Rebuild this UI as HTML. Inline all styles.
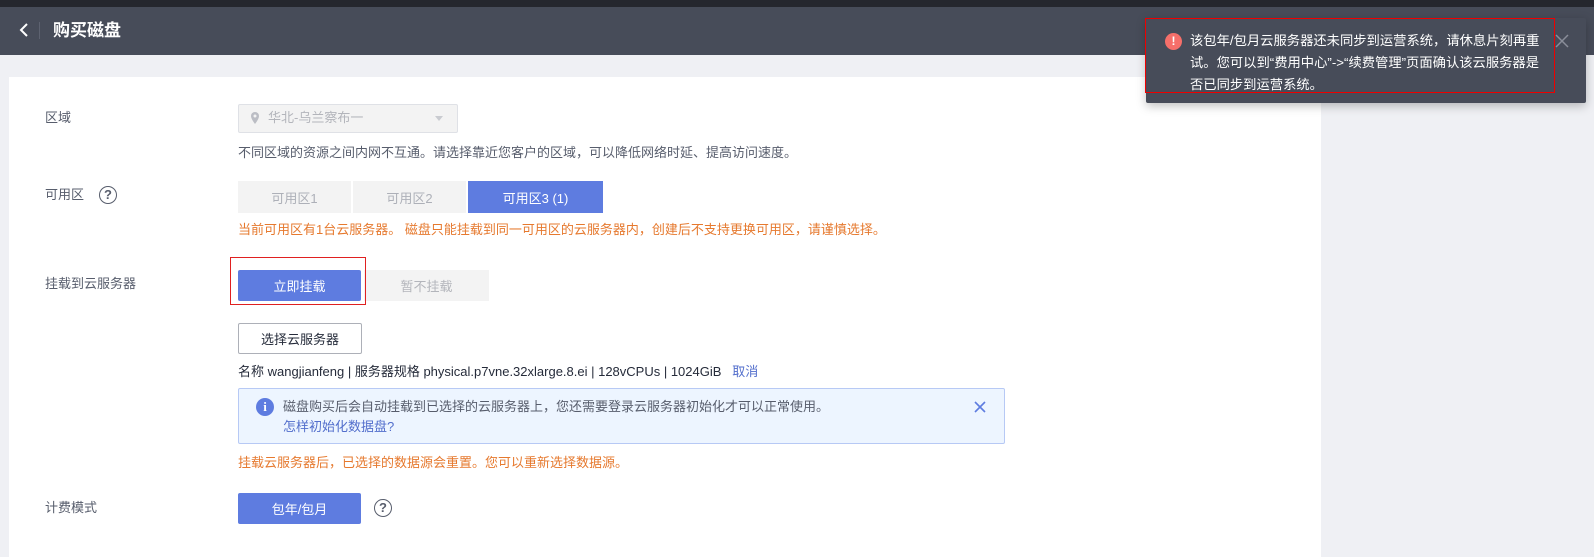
<!DOCTYPE html>
<html><head><meta charset="utf-8"><style>
*{margin:0;padding:0;box-sizing:border-box}
body{width:1594px;height:554px;overflow:hidden;background:#eff0f4;font-family:"Liberation Sans","Noto Sans CJK SC",sans-serif;font-size:13px;color:#252b3a;position:relative}
.a{position:absolute}
.lbl{position:absolute;left:45px;color:#575d6c;font-size:13px;line-height:16px}
.btn{position:absolute;display:flex;align-items:center;justify-content:center;font-size:13px}
</style></head><body>
<div class="a" style="left:0;top:0;width:1594px;height:7px;background:#25272e"></div>
<div class="a" style="left:0;top:7px;width:1594px;height:48px;background:#474c59"></div>
<svg class="a" style="left:18px;top:22px" width="12" height="16"><path d="M9 2 L3 8 L9 14" stroke="#fff" stroke-width="2" fill="none"/></svg>
<div class="a" style="left:39px;top:22px;width:1px;height:17px;background:#5d6270"></div>
<div class="a" style="left:53px;top:20px;color:#fff;font-size:17px;font-weight:bold;line-height:22px">购买磁盘</div>

<div class="a" style="left:9px;top:77px;width:1312px;height:480px;background:#fff"></div>

<div class="lbl" style="top:110px">区域</div>
<div class="a" style="left:238px;top:104px;width:220px;height:29px;background:#f3f3f3;border:1px solid #dfe1e6;border-radius:2px"></div>
<svg class="a" style="left:250px;top:111px" width="10" height="14"><path d="M5 1a4 4 0 0 0-4 4c0 3 4 8 4 8s4-5 4-8a4 4 0 0 0-4-4z" fill="#bbbdc4"/><circle cx="5" cy="5" r="1.5" fill="#f3f3f3"/></svg>
<div class="a" style="left:268px;top:110px;color:#b3b5bb;line-height:16px">华北-乌兰察布一</div>
<div class="a" style="left:435px;top:116px;border:4px solid transparent;border-top:5px solid #c9cbd0"></div>
<div class="a" style="left:238px;top:145px;color:#575d6c;line-height:16px">不同区域的资源之间内网不互通。请选择靠近您客户的区域，可以降低网络时延、提高访问速度。</div>

<div class="lbl" style="top:187px">可用区</div>
<div class="a" style="left:99px;top:186px;width:18px;height:18px;border:1.5px solid #575d6c;border-radius:50%;font-size:13px;line-height:15px;text-align:center;color:#575d6c;font-weight:bold">?</div>
<div class="btn" style="left:238px;top:181px;width:113px;height:32px;background:#f3f3f3;color:#adb0b8">可用区1</div>
<div class="btn" style="left:353px;top:181px;width:113px;height:32px;background:#f3f3f3;color:#adb0b8">可用区2</div>
<div class="btn" style="left:468px;top:181px;width:135px;height:32px;background:#5e7ce0;color:#fff">可用区3 (1)</div>
<div class="a" style="left:238px;top:222px;color:#e6792e;line-height:16px">当前可用区有1台云服务器。 磁盘只能挂载到同一可用区的云服务器内，创建后不支持更换可用区，请谨慎选择。</div>

<div class="lbl" style="top:276px">挂载到云服务器</div>
<div class="btn" style="left:238px;top:270px;width:123px;height:31px;background:#5e7ce0;color:#fff;border-radius:2px">立即挂载</div>
<div class="btn" style="left:364px;top:270px;width:125px;height:31px;background:#f3f3f3;color:#b3b5bb">暂不挂载</div>
<div class="a" style="left:230px;top:257px;width:136px;height:48px;border:1.5px solid #e02020"></div>
<div class="btn" style="left:238px;top:323px;width:124px;height:31px;border:1px solid #adb0b8;border-radius:2px;color:#252b3a">选择云服务器</div>
<div class="a" style="left:238px;top:364px;color:#252b3a;line-height:16px">名称 wangjianfeng | 服务器规格 physical.p7vne.32xlarge.8.ei | 128vCPUs | 1024GiB &nbsp;&nbsp;<span style="color:#526ecc">取消</span></div>

<div class="a" style="left:238px;top:388px;width:767px;height:56px;background:#edf5ff;border:1px solid #b7c9f5;border-radius:2px"></div>
<div class="a" style="left:256px;top:398px;width:18px;height:18px;border-radius:50%;background:#5e7ce0;color:#fff;font-weight:bold;font-size:13px;line-height:18px;text-align:center;font-family:'Liberation Serif',serif">i</div>
<div class="a" style="left:283px;top:399px;color:#575d6c;line-height:16px">磁盘购买后会自动挂载到已选择的云服务器上，您还需要登录云服务器初始化才可以正常使用。</div>
<div class="a" style="left:283px;top:419px;color:#526ecc;line-height:16px">怎样初始化数据盘?</div>
<svg class="a" style="left:974px;top:401px" width="12" height="12"><path d="M1 1L11 11M11 1L1 11" stroke="#5e7ce0" stroke-width="1.6"/></svg>
<div class="a" style="left:238px;top:455px;color:#e6792e;line-height:16px">挂载云服务器后，已选择的数据源会重置。您可以重新选择数据源。</div>

<div class="lbl" style="top:500px">计费模式</div>
<div class="btn" style="left:238px;top:493px;width:123px;height:31px;background:#5e7ce0;color:#fff;border-radius:2px">包年/包月</div>
<div class="a" style="left:374px;top:499px;width:18px;height:18px;border:1.5px solid #575d6c;border-radius:50%;font-size:13px;line-height:15px;text-align:center;color:#575d6c;font-weight:bold">?</div>

<div class="a" style="left:1146px;top:18px;width:440px;height:85px;background:#474c59;box-shadow:0 3px 10px rgba(0,0,0,.25);border-radius:2px"></div>
<div class="a" style="left:1145px;top:18px;width:410px;height:75px;border:1.5px solid #e00"></div>
<div class="a" style="left:1165px;top:33px;width:17px;height:17px;border-radius:50%;background:#f66f6a;color:#fff;font-weight:bold;font-size:12px;line-height:17px;text-align:center">!</div>
<div class="a" style="left:1190px;top:30px;width:362px;color:#fff;font-size:13.3px;line-height:22px">该包年/包月云服务器还未同步到运营系统，请休息片刻再重试。您可以到“费用中心”->“续费管理”页面确认该云服务器是否已同步到运营系统。</div>
<svg class="a" style="left:1555px;top:34px" width="14" height="14"><path d="M1 1L13 13M13 1L1 13" stroke="#8a8e99" stroke-width="1.5"/></svg>
</body></html>
